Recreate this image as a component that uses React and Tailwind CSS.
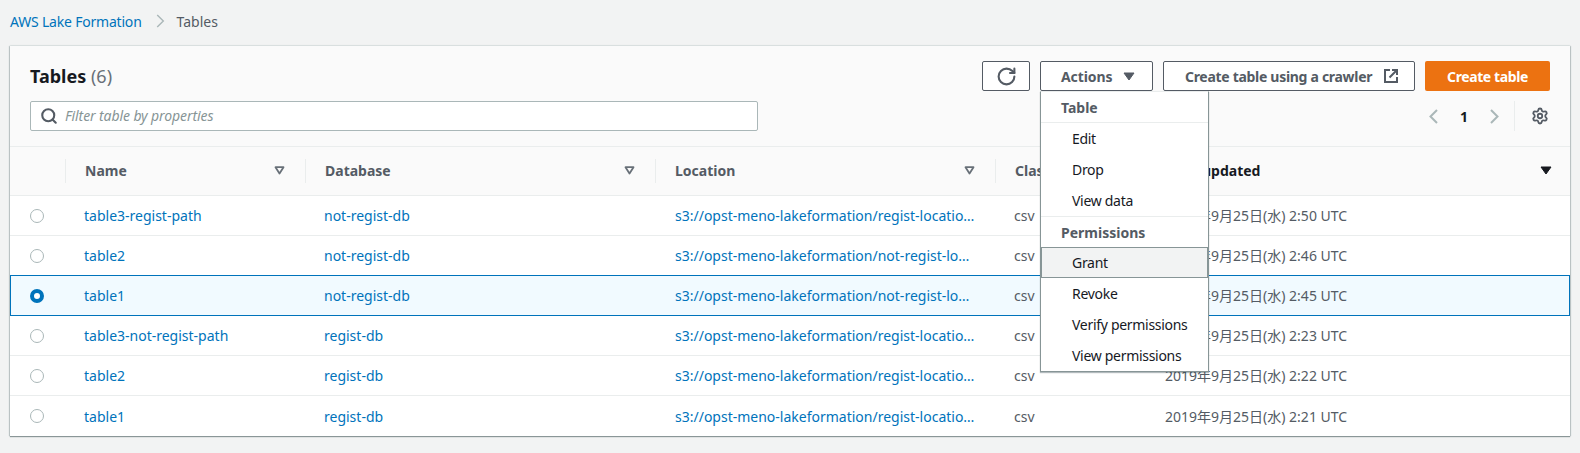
import { RotateCw, Search, Settings } from 'lucide-react';

const rows = [
  { name: 'table3-regist-path', db: 'not-regist-db', location: 's3://opst-meno-lakeformation/regist-locatio…', time: '2:50' },
  { name: 'table2', db: 'not-regist-db', location: 's3://opst-meno-lakeformation/not-regist-lo…', time: '2:46' },
  { name: 'table1', db: 'not-regist-db', location: 's3://opst-meno-lakeformation/not-regist-lo…', time: '2:45', selected: true },
  { name: 'table3-not-regist-path', db: 'regist-db', location: 's3://opst-meno-lakeformation/regist-locatio…', time: '2:23' },
  { name: 'table2', db: 'regist-db', location: 's3://opst-meno-lakeformation/regist-locatio…', time: '2:22' },
  { name: 'table1', db: 'regist-db', location: 's3://opst-meno-lakeformation/regist-locatio…', time: '2:21' },
];

const COLS = 'grid grid-cols-[55px_240px_350px_340px_154px_1fr]';

function SortIcon() {
  return (
    <svg width="11" height="9" viewBox="0 0 11 9" className="shrink-0">
      <path d="M1.500 1.200h8L5.500 7.500z" fill="none" stroke="#687078" strokeWidth="1.800" strokeLinejoin="round" />
    </svg>
  );
}

function CaretDown({ color }) {
  return (
    <svg width="12" height="9" viewBox="0 0 12 9" className="shrink-0">
      <path d="M1 1h10L6 8z" fill={color} stroke={color} strokeWidth="1" strokeLinejoin="round" />
    </svg>
  );
}

function Chevron({ left, width = 9, height = 15, color = '#aab7b8', stroke = 2 }) {
  return (
    <svg width={width} height={height} viewBox="0 0 9 15" className="shrink-0">
      <path d={left ? 'M8 1L1.500 7.500 8 14' : 'M1 1l6.500 6.500L1 14'} fill="none" stroke={color} strokeWidth={stroke} />
    </svg>
  );
}

function ExternalIcon() {
  return (
    <svg width="14" height="14" viewBox="0 0 14 14" className="shrink-0">
      <path d="M6 1H1v12h12V8" fill="none" stroke="#545b64" strokeWidth="2" />
      <path d="M5.500 8.500L12 2M8 1h5v5" fill="none" stroke="#545b64" strokeWidth="2" />
    </svg>
  );
}

function HeaderCell({ label, sort }) {
  return (
    <div className="relative flex h-full items-center px-5 pb-[2px]">
      <span className="absolute top-3 left-0 h-6 w-px bg-[#eaeded]" />
      <span className="flex-1 font-bold text-[#545b64]">{label}</span>
      {sort && <SortIcon />}
    </div>
  );
}

function Radio({ on }) {
  if (on) return <span className="block h-3.5 w-3.5 rounded-full border-[4px] border-[#0073bb] bg-white" />;
  return <span className="block h-3.5 w-3.5 rounded-full border border-[#aab7b8] bg-white" />;
}

function MenuItem({ label, active }) {
  return (
    <div className={`flex h-[31px] items-center tracking-[-0.3px] text-[#16191f] ${active ? 'border border-[#879596] bg-[#f2f3f3] pl-[30px]' : 'pl-[31px]'}`}>
      {label}
    </div>
  );
}

export default function App() {
  return (
    <div className="h-[453px] w-[1580px] overflow-hidden bg-[#f2f3f3] text-[14px] text-[#16191f] [font-family:'Noto_Sans','Noto_Sans_CJK_JP',sans-serif]">
      <div className="flex h-[46px] items-center pb-[4px] pl-[10px] text-[#545b64]">
        <span className="tracking-[-0.2px] text-[#0073bb]">AWS Lake Formation</span>
        <span className="mr-[12px] ml-[14px]"><Chevron width={9} height={14} stroke={1.5} /></span>
        <span>Tables</span>
      </div>

      <div className="relative ml-[10px] h-[390px] w-[1560px] bg-white shadow-[0_1px_1px_0_#8a9697,-1px_0_1px_0_#c5cccd,1px_0_1px_0_#c5cccd,0_-1px_1px_0_#e4e7e7]">
        <div className="h-[101px] border-b border-[#eaeded] bg-[#fafafa] px-5 pt-[15px]">
          <div className="flex items-start justify-between">
            <div className="text-[18px] leading-[30px] font-bold text-[#16191f]">
              Tables <span className="font-normal text-[#687078]">(6)</span>
            </div>
            <div className="flex gap-[10px]">
              <button className="flex h-[30px] w-[48px] items-center justify-center rounded-[2px] border border-[#545b64] bg-white text-[#545b64]">
                <RotateCw size={21} strokeWidth={2.4} />
              </button>
              <button className="flex h-[30px] w-[113px] items-center gap-[11px] rounded-[2px] border border-[#545b64] bg-white pl-[20px] font-bold tracking-[-0.1px] text-[#545b64]">
                Actions
                <CaretDown color="#545b64" />
              </button>
              <button className="flex h-[30px] w-[252px] items-center gap-[12px] rounded-[2px] border border-[#545b64] bg-white pl-[21px] font-bold tracking-[-0.3px] text-[#545b64]">
                Create table using a crawler
                <ExternalIcon />
              </button>
              <button className="h-[30px] w-[125px] rounded-[2px] bg-[#ec7211] font-bold tracking-[-0.4px] text-white">Create table</button>
            </div>
          </div>

          <div className="mt-[10px] flex items-center justify-between">
            <div className="flex h-[30px] w-[728px] items-center gap-[7px] rounded-[2px] border border-[#aab7b8] bg-white pb-[2px] pl-[9px]">
              <Search size={18} strokeWidth={2.8} className="mt-[2px] text-[#545b64]" />
              <span className="tracking-[-0.1px] text-[#879596] italic">Filter table by properties</span>
            </div>
            <div className="mr-[1px] flex h-[30px] items-center">
              <Chevron left />
              <span className="mx-[22px] font-bold text-[#16191f]">1</span>
              <Chevron />
              <span className="mr-[16px] ml-[15px] h-[30px] w-px bg-[#eaeded]" />
              <Settings size={18} strokeWidth={2.4} className="text-[#545b64]" />
            </div>
          </div>
        </div>

        <div className={`${COLS} h-[49px] border-b border-[#eaeded] bg-[#fafafa]`}>
          <div />
          <HeaderCell label="Name" sort />
          <HeaderCell label="Database" sort />
          <HeaderCell label="Location" sort />
          <HeaderCell label="Classification" />
          <div className="relative flex h-full items-center pr-[18px] pb-[2px] pl-5">
            <span className="flex-1 font-bold text-[#16191f]">Last updated</span>
            <CaretDown color="#16191f" />
          </div>
        </div>

        {rows.map((row, i) => (
          <div
            key={i}
            className={`${COLS} items-center ${row.selected ? '-mt-px h-[41px] bg-[#f1faff] shadow-[inset_0_0_0_1px_#0073bb]' : i === rows.length - 1 ? 'h-10' : 'h-10 border-b border-[#eaeded]'}`}
          >
            <div className="flex justify-center pr-[2px]"><Radio on={row.selected} /></div>
            <div className="pl-[19px] text-[#0073bb]">{row.name}</div>
            <div className="pl-[19px] text-[#0073bb]">{row.db}</div>
            <div className="pl-5 text-[#0073bb]">{row.location}</div>
            <div className="pl-[19px] text-[#545b64]">csv</div>
            <div className="pl-[16px] text-[#545b64]">2019年9月25日(水) {row.time} UTC</div>
          </div>
        ))}

        <div className="absolute top-[45px] left-[1030px] z-10 w-[169px] border border-[#879596] border-t-[#eaeded] bg-white shadow-[0_1px_1px_0_rgba(0,28,36,0.3)]">
          <div className="flex h-[31px] items-center border-b border-[#eaeded] pl-5 font-bold text-[#545b64]">Table</div>
          <MenuItem label="Edit" />
          <MenuItem label="Drop" />
          <MenuItem label="View data" />
          <div className="flex h-[31px] items-center border-t border-[#eaeded] pl-5 font-bold text-[#545b64]">Permissions</div>
          <MenuItem label="Grant" active />
          <MenuItem label="Revoke" />
          <MenuItem label="Verify permissions" />
          <MenuItem label="View permissions" />
        </div>
      </div>
    </div>
  );
}
